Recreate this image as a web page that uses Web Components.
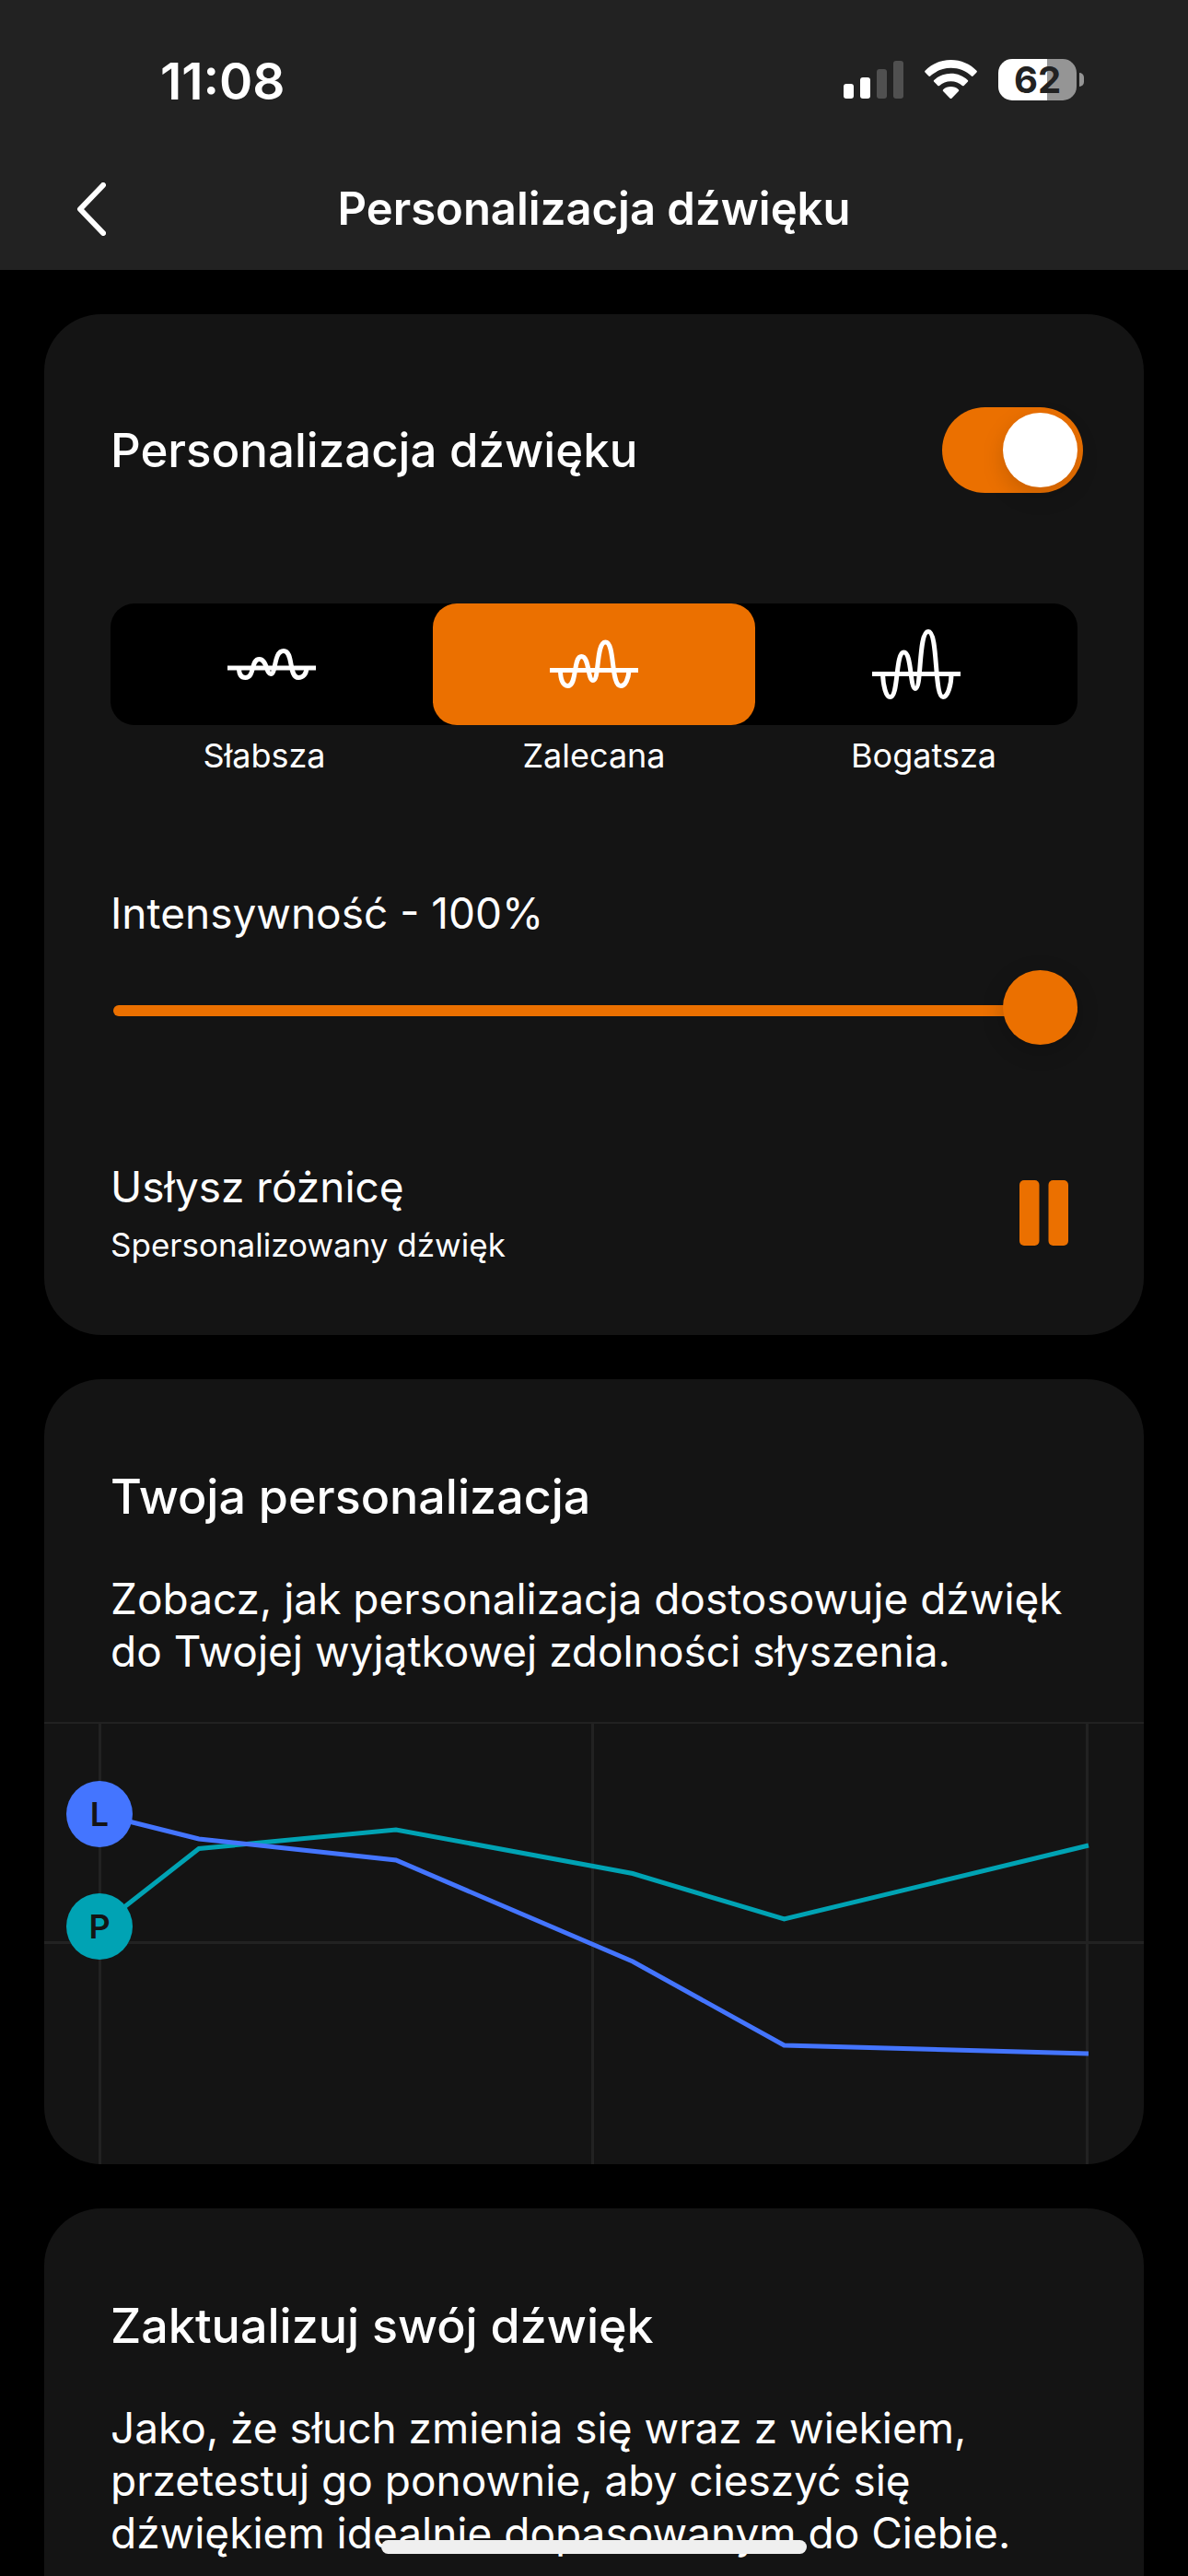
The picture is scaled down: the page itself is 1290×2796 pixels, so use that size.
<!DOCTYPE html>
<html lang="pl">
<head>
<meta charset="utf-8">
<meta name="viewport" content="width=device-width, initial-scale=1">
<title>Personalizacja dźwięku</title>
<style>
  :root {
    --orange: #eb7000;
    --blue: #4475ff;
    --teal: #00a3b4;
    --bar: #222;
    --card: #141414;
    --white: #fff;
  }

  body {
    margin: 0;
    background: #000;
    color: var(--white);
    font-family: Inter, "Liberation Sans", sans-serif;
  }
</style>
</head>
<body>

<sound-screen>
  <status-bar slot="header" time="11:08" battery="62"></status-bar>
  <nav-bar slot="header">Personalizacja dźwięku</nav-bar>

  <info-card>
    <toggle-row>Personalizacja dźwięku</toggle-row>
    <level-picker></level-picker>
    <intensity-slider value="100"></intensity-slider>
    <preview-row>
      <span slot="title">Usłysz różnicę</span>
      <span slot="detail">Spersonalizowany dźwięk</span>
    </preview-row>
  </info-card>

  <info-card heading="Twoja personalizacja">
    Zobacz, jak personalizacja dostosowuje dźwięk do Twojej wyjątkowej zdolności słyszenia.
    <hearing-chart slot="bottom"></hearing-chart>
  </info-card>

  <info-card heading="Zaktualizuj swój dźwięk">
    Jako, że słuch zmienia się wraz z wiekiem, przetestuj go ponownie, aby cieszyć się dźwiękiem idealnie dopasowanym do Ciebie.
  </info-card>
</sound-screen>

<script>
function makeTemplate(html) {
  const template = document.createElement('template');
  template.innerHTML = html;
  return template;
}

const screenTemplate = makeTemplate(`
<style>
  :host {
    display: flex;
    flex-direction: column;
    height: 100vh;
    overflow: hidden;
  }

  header {
    background: var(--bar);
  }

  main {
    flex: 1;
    min-height: 0;
    overflow-y: auto;
    scrollbar-width: none;
    display: flex;
    flex-direction: column;
    gap: 48px;
    padding: 48px;
  }

  ::slotted(info-card:last-child) {
    padding-bottom: 96px;
  }

  .home {
    position: fixed;
    bottom: 24px;
    left: 50%;
    width: 462px;
    height: 15px;
    margin-left: -231px;
    border-radius: 8px;
    background: #efefef;
  }
</style>

<header><slot name="header"></slot></header>
<main><slot></slot></main>
<div class="home"></div>
`);

class SoundScreen extends HTMLElement {
  constructor() {
    super();
    this.attachShadow({mode: 'open'});
    this.shadowRoot.appendChild(screenTemplate.content.cloneNode(true));
  }
}

const statusTemplate = makeTemplate(`
<style>
  :host {
    display: flex;
    justify-content: space-between;
    align-items: center;
    height: 147px;
    padding: 14px 113px 0 174px;
  }

  .time {
    font-size: 55px;
    font-weight: 600;
    line-height: 64px;
  }

  .icons {
    display: flex;
    align-items: center;
    gap: 23px;
    margin-bottom: 2px;
  }

  svg {
    display: block;
  }

  .battery {
    display: flex;
    align-items: center;
    gap: 3px;
  }

  .level {
    width: 85px;
    height: 45px;
    border-radius: 15px;
    color: var(--bar);
    font-size: 40px;
    font-weight: 700;
    line-height: 45px;
    text-align: center;
  }

  .nub {
    width: 5px;
    height: 15px;
    border-radius: 0 5px 5px 0;
    background: #959595;
  }
</style>

<span class="time"></span>
<div class="icons">
  <svg width="65" height="45" viewBox="0 0 65 45">
    <g fill="#fff">
      <rect x="0" y="27" width="11" height="16" rx="3"/>
      <rect x="18" y="20" width="11" height="23" rx="3"/>
    </g>
    <g fill="#505050">
      <rect x="36" y="11" width="11" height="32" rx="3"/>
      <rect x="54" y="2" width="11" height="41" rx="3"/>
    </g>
  </svg>
  <svg width="57" height="45" viewBox="0 0 57 45" fill="#fff">
    <path d="M28.5 1C39.500 1 49.500 5.500 56.500 12.700Q57.300 13.600 56.500 14.500L52.600 18.600Q51.700 19.500 50.800 18.600C45 13.100 37.200 9.800 28.500 9.800S12 13.100 6.200 18.600Q5.300 19.500 4.400 18.600L.5 14.500Q-.3 13.600.5 12.700C7.500 5.500 17.500 1 28.500 1Z"/>
    <path d="M28.500 15.700C35.600 15.700 42 18.400 46.800 22.900Q47.700 23.800 46.800 24.700L42.700 28.900Q41.800 29.700 40.900 28.900C37.600 26 33.300 24.300 28.500 24.300S19.400 26 16.100 28.900Q15.200 29.700 14.300 28.900L10.200 24.700Q9.300 23.800 10.200 22.900C15 18.400 21.400 15.700 28.500 15.700Z"/>
    <path d="M28.500 30C31.700 30 34.700 31.200 36.900 33.200Q37.800 34.100 36.900 35L29.400 42.700Q28.500 43.500 27.600 42.700L20.100 35Q19.200 34.100 20.100 33.200C22.300 31.200 25.300 30 28.500 30Z"/>
  </svg>
  <div class="battery">
    <div class="level"></div>
    <div class="nub"></div>
  </div>
</div>
`);

class StatusBar extends HTMLElement {
  constructor() {
    super();
    this.attachShadow({mode: 'open'});
    this.shadowRoot.appendChild(statusTemplate.content.cloneNode(true));

    const battery = this.getAttribute('battery');
    const level = this.shadowRoot.querySelector('.level');
    this.shadowRoot.querySelector('.time').textContent = this.getAttribute('time');
    level.textContent = battery;
    level.style.background = `linear-gradient(90deg, #fff ${battery}%, #959595 ${battery}%)`;
  }
}

const navTemplate = makeTemplate(`
<style>
  :host {
    display: grid;
    grid-template-columns: 96px 1fr 96px;
    align-items: center;
    height: 132px;
    padding: 0 51px;
  }

  button {
    display: flex;
    align-items: center;
    justify-content: center;
    width: 96px;
    height: 96px;
    padding: 0;
    border: none;
    background: none;
    cursor: pointer;
  }

  h1 {
    margin: 0;
    font-size: 49px;
    font-weight: 600;
    line-height: 64px;
    text-align: center;
  }
</style>

<button type="button" aria-label="Wstecz">
  <svg width="32" height="58" viewBox="0 0 32 58" fill="none" stroke="#fff" stroke-width="6" stroke-linecap="round" stroke-linejoin="round">
    <path d="M29 3L4 29L29 55"/>
  </svg>
</button>
<h1><slot></slot></h1>
`);

class NavBar extends HTMLElement {
  constructor() {
    super();
    this.attachShadow({mode: 'open'});
    this.shadowRoot.appendChild(navTemplate.content.cloneNode(true));
    this.shadowRoot.querySelector('button').addEventListener('click', () => history.back());
  }
}

const cardTemplate = makeTemplate(`
<style>
  :host {
    display: block;
    flex-shrink: 0;
    background: var(--card);
    border-radius: 62px;
    overflow: hidden;
  }

  .content {
    padding: 101px 72px 76px;
  }

  :host([heading]) .content {
    padding: 96px 72px 48px;
  }

  h2 {
    margin: 0 0 50px;
    font-size: 52px;
    font-weight: 500;
    line-height: 64px;
  }

  :host([heading]) .body {
    font-size: 46px;
    line-height: 57px;
  }
</style>

<div class="content">
  <div class="body"><slot></slot></div>
</div>
<slot name="bottom"></slot>
`);

class InfoCard extends HTMLElement {
  constructor() {
    super();
    this.attachShadow({mode: 'open'});
    this.shadowRoot.appendChild(cardTemplate.content.cloneNode(true));

    if (this.hasAttribute('heading')) {
      const heading = document.createElement('h2');
      heading.textContent = this.getAttribute('heading');
      this.shadowRoot.querySelector('.content').prepend(heading);
    }
  }
}

const toggleTemplate = makeTemplate(`
<style>
  :host {
    display: flex;
    align-items: center;
    justify-content: space-between;
    margin-right: -6px;
  }

  label {
    font-size: 51px;
    font-weight: 500;
    line-height: 64px;
  }

  input {
    appearance: none;
    display: flex;
    width: 153px;
    height: 93px;
    margin: 0;
    padding: 6px;
    box-sizing: border-box;
    border-radius: 47px;
    background: #3a3a3a;
    cursor: pointer;
  }

  input::before {
    content: '';
    width: 81px;
    height: 81px;
    border-radius: 50%;
    background: #fff;
    box-shadow: 0 9px 24px rgba(0, 0, 0, .15);
  }

  input:checked {
    justify-content: flex-end;
    background: var(--orange);
  }
</style>

<label for="toggle"><slot></slot></label>
<input type="checkbox" role="switch" id="toggle" checked>
`);

class ToggleRow extends HTMLElement {
  constructor() {
    super();
    this.attachShadow({mode: 'open'});
    this.shadowRoot.appendChild(toggleTemplate.content.cloneNode(true));
  }
}

// the same wave in three heights, the baseline moves down as it grows
const levels = [
  {
    name: 'Słabsza',
    line: 48,
    wave: 'M12.500 48C12.500 55 15 58.500 19.500 58.500C30 58.500 25 38.500 34.500 38.500C43 38.500 42 54.500 47 54.500C53 54.500 50 29.500 61 29.500C72 29.500 66 58.500 77 58.500C82 58.500 85.500 55 86 48'
  },
  {
    name: 'Zalecana',
    line: 50.5,
    wave: 'M11.500 50.500C11.500 60 14 67.500 19.500 67.500C30 67.500 25 35.500 34.500 35.500C43 35.500 41 61.500 47 61.500C54 61.500 50 20 60.500 20C71 20 66 67.500 77 67.500C82 67.500 85.500 60 86 50.500'
  },
  {
    name: 'Bogatsza',
    line: 54.5,
    wave: 'M11.500 54.500C12 67 15 79.500 19.500 79.500C29 79.500 25 31 34.500 31C43 31 41 70.500 47 70.500C54 70.500 50 8.500 61 8.500C72 8.500 67 79.500 77 79.500C82 79.500 86 67 86 54.500'
  }
];

const pickerTemplate = makeTemplate(`
<style>
  :host {
    display: block;
    margin-top: 120px;
  }

  fieldset {
    display: grid;
    grid-template-columns: repeat(3, 1fr);
    min-width: 0;
    margin: 0;
    padding: 0;
    border: none;
    border-radius: 26px;
    background: #000;
  }

  input {
    appearance: none;
    grid-area: 1 / 1;
    width: 100%;
    height: 132px;
    margin: 0;
    border-radius: 26px;
    cursor: pointer;
  }

  input:checked {
    background: var(--orange);
  }

  .option {
    display: grid;
    align-items: center;
    justify-items: center;
  }

  svg {
    grid-area: 1 / 1;
    pointer-events: none;
  }

  .labels {
    display: grid;
    grid-template-columns: repeat(3, 1fr);
    margin: 11px -12px 0;
  }

  label {
    font-size: 36px;
    line-height: 44px;
    text-align: center;
  }
</style>

<fieldset aria-label="Poziom"></fieldset>
<div class="labels"></div>
`);

class LevelPicker extends HTMLElement {
  constructor() {
    super();
    this.attachShadow({mode: 'open'});
    this.shadowRoot.appendChild(pickerTemplate.content.cloneNode(true));

    this.shadowRoot.querySelector('fieldset').innerHTML = levels.map((level, i) => `
      <div class="option">
        <input type="radio" name="level" id="level-${i}" ${i === 1 ? 'checked' : ''}>
        <svg width="96" height="88" viewBox="0 0 96 88" fill="none" stroke="#fff" stroke-width="5">
          <path d="M0 ${level.line}H96"/>
          <path d="${level.wave}"/>
        </svg>
      </div>
    `).join('');

    this.shadowRoot.querySelector('.labels').innerHTML = levels.map((level, i) => `
      <label for="level-${i}">${level.name}</label>
    `).join('');
  }
}

const sliderTemplate = makeTemplate(`
<style>
  :host {
    display: block;
    margin-top: 120px;
  }

  label {
    display: block;
    font-size: 46px;
    line-height: 58px;
  }

  input {
    appearance: none;
    display: block;
    width: calc(100% - 3px);
    height: 88px;
    margin: 33px 0 0 3px;
    background: none;
    cursor: pointer;
  }

  input::-webkit-slider-runnable-track {
    height: 12px;
    border-radius: 6px;
    background: linear-gradient(90deg, var(--orange) var(--fill), #3a3a3a var(--fill));
  }

  input::-webkit-slider-thumb {
    appearance: none;
    width: 81px;
    height: 81px;
    margin-top: -38px;
    border-radius: 50%;
    background: var(--orange);
    box-shadow: 0 6px 24px rgba(0, 0, 0, .2);
  }
</style>

<label for="intensity"></label>
<input type="range" id="intensity" min="0" max="100">
`);

class IntensitySlider extends HTMLElement {
  constructor() {
    super();
    this.attachShadow({mode: 'open'});
    this.shadowRoot.appendChild(sliderTemplate.content.cloneNode(true));
    this.label = this.shadowRoot.querySelector('label');
    this.input = this.shadowRoot.querySelector('input');
    this.input.value = this.getAttribute('value');
    this.update();
  }

  update() {
    this.label.textContent = `Intensywność - ${this.input.value}%`;
    this.input.style.setProperty('--fill', `${this.input.value}%`);
  }

  connectedCallback() {
    this.input.addEventListener('input', () => this.update());
  }
}

const previewTemplate = makeTemplate(`
<style>
  :host {
    display: flex;
    align-items: center;
    justify-content: space-between;
    margin-top: 118px;
  }

  .text {
    display: flex;
    flex-direction: column;
    gap: 12px;
  }

  .title {
    font-size: 46px;
    line-height: 58px;
  }

  .detail {
    font-size: 35px;
    line-height: 44px;
  }

  button {
    padding: 0 10px;
    border: none;
    background: none;
    cursor: pointer;
  }

  svg {
    display: block;
  }
</style>

<div class="text">
  <div class="title"><slot name="title"></slot></div>
  <div class="detail"><slot name="detail"></slot></div>
</div>
<button type="button" aria-label="Pauza">
  <svg width="53" height="71" viewBox="0 0 53 71">
    <rect width="21.500" height="71" rx="5" fill="#eb7000"/>
    <rect x="31.500" width="21.500" height="71" rx="5" fill="#eb7000"/>
  </svg>
</button>
`);

class PreviewRow extends HTMLElement {
  constructor() {
    super();
    this.attachShadow({mode: 'open'});
    this.shadowRoot.appendChild(previewTemplate.content.cloneNode(true));
  }
}

const chartTemplate = makeTemplate(`
<style>
  :host {
    display: block;
  }

  svg {
    display: block;
    width: 100%;
  }

  .grid {
    stroke: #222;
    stroke-width: 3;
  }

  .line {
    fill: none;
    stroke-width: 5;
  }

  .left {
    stroke: var(--blue);
  }

  .right {
    stroke: var(--teal);
  }

  text {
    fill: var(--card);
    font-size: 36px;
    font-weight: 600;
    text-anchor: middle;
  }
</style>

<svg viewBox="0 0 1194 480" role="img" aria-label="Lewe i prawe ucho">
  <path class="grid" d="M0 .5H1194M0 239.500H1194M60.500 1V480M595.500 1V480M1132.500 1V480"/>
  <polyline class="line right" points="60,222 168,137.500 382,117 639,164.500 803.500,214 1134,134"/>
  <polyline class="line left" points="60,100 168,127 382,150 639,260 803.500,351 1134,360"/>
  <circle cx="60" cy="100" r="36" fill="#4475ff"/>
  <circle cx="60" cy="222" r="36" fill="#00a3b4"/>
  <text x="60" y="113">L</text>
  <text x="60" y="235">P</text>
</svg>
`);

class HearingChart extends HTMLElement {
  constructor() {
    super();
    this.attachShadow({mode: 'open'});
    this.shadowRoot.appendChild(chartTemplate.content.cloneNode(true));
  }
}

window.customElements.define('sound-screen', SoundScreen);
window.customElements.define('status-bar', StatusBar);
window.customElements.define('nav-bar', NavBar);
window.customElements.define('info-card', InfoCard);
window.customElements.define('toggle-row', ToggleRow);
window.customElements.define('level-picker', LevelPicker);
window.customElements.define('intensity-slider', IntensitySlider);
window.customElements.define('preview-row', PreviewRow);
window.customElements.define('hearing-chart', HearingChart);
</script>
</body>
</html>
